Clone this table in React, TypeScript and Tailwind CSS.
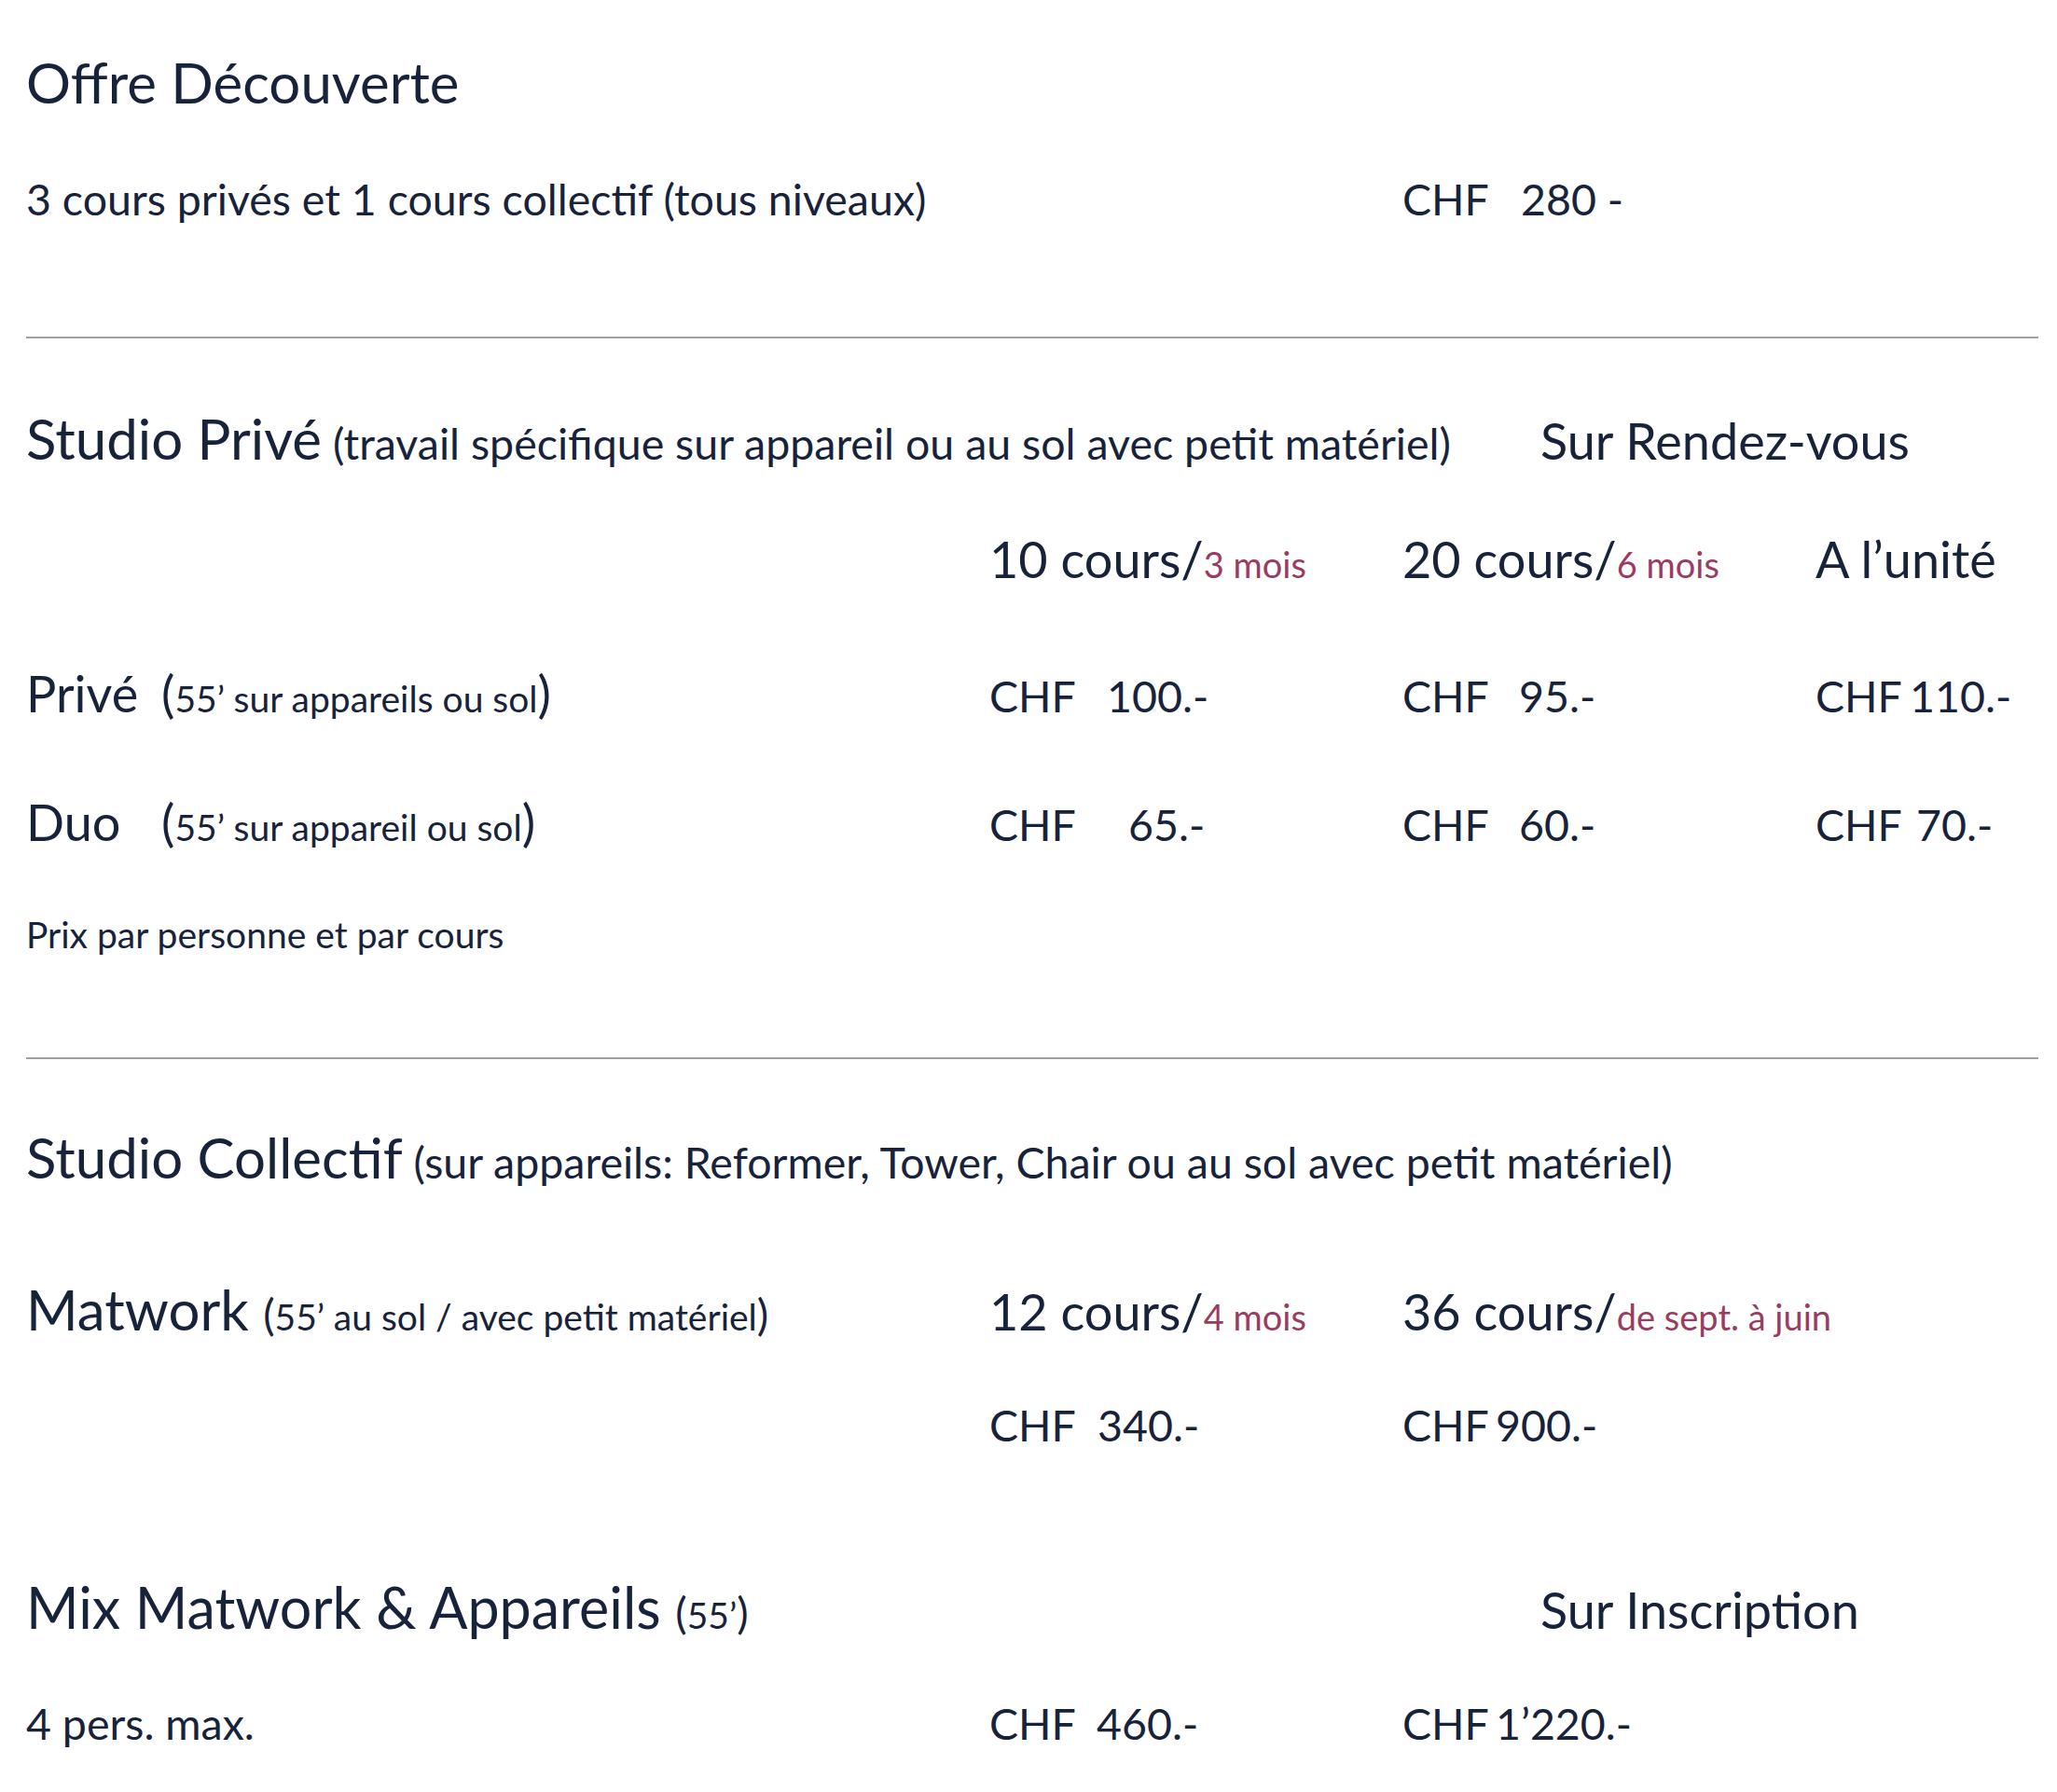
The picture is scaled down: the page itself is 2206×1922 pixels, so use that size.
import React from "react";

const ink = "text-[#17223b]";
const accent = "text-[#9b3b62]";

const Price = ({ cur, amt, w }: { cur: string; amt: string; w: string }) => (
    <span className="whitespace-nowrap">
        <span className={`inline-block ${w}`}>{cur}</span>
        {amt}
    </span>
);

const Rule = ({ mt }: { mt: string }) => <div className={`${mt} h-[2px] w-full bg-[#a0a0a0]`} />;

const App = () => {
    return (
        <div
            className={`min-h-[1922px] w-[2206px] bg-white pl-[28px] pr-[20px] pt-[58px] ${ink} leading-none`}
            style={{ fontFamily: "Lato, 'Open Sans', sans-serif" }}
        >
            {/* Offre découverte */}
            <div className="text-[60px]">Offre Découverte</div>
            <div className="mt-[72px] flex items-baseline text-[46.5px]">
                <div className="w-[1476px] whitespace-nowrap">3 cours privés et 1 cours collectif (tous niveaux)</div>
                <Price cur="CHF" amt="280 -" w="w-[127px]" />
            </div>

            <Rule mt="mt-[124px]" />

            {/* Studio privé */}
            <div className="mt-[77px] flex items-baseline whitespace-nowrap">
                <div className="w-[1624px]">
                    <span className="text-[60px]">Studio Privé</span>
                    <span className="text-[46.5px]"> (travail spécifique sur appareil ou au sol avec petit matériel)</span>
                </div>
                <div className="text-[54px]">Sur Rendez-vous</div>
            </div>

            <div className="mt-[73px] flex items-baseline whitespace-nowrap text-[54px]">
                <div className="w-[1033px]" />
                <div className="w-[443px]">
                    10 cours/<span className={`text-[38px] ${accent}`}>3 mois</span>
                </div>
                <div className="w-[443px]">
                    20 cours/<span className={`text-[38px] ${accent}`}>6 mois</span>
                </div>
                <div>A l’unité</div>
            </div>

            <div className="mt-[90px] flex items-baseline whitespace-nowrap">
                <div className="w-[1033px]">
                    <span className="inline-block w-[145px] text-[54px]">Privé</span>
                    <span className="text-[54px]">(</span>
                    <span className="text-[39px]">55’ sur appareils ou sol</span>
                    <span className="text-[54px]">)</span>
                </div>
                <div className="w-[443px] text-[46.5px]">
                    <Price cur="CHF" amt="100.-" w="w-[126px]" />
                </div>
                <div className="w-[443px] text-[46.5px]">
                    <Price cur="CHF" amt="95.-" w="w-[125px]" />
                </div>
                <div className="text-[46.5px]">
                    <Price cur="CHF" amt="110.-" w="w-[101px]" />
                </div>
            </div>

            <div className="mt-[84px] flex items-baseline whitespace-nowrap">
                <div className="w-[1033px]">
                    <span className="inline-block w-[145px] text-[54px]">Duo</span>
                    <span className="text-[54px]">(</span>
                    <span className="text-[39px]">55’ sur appareil ou sol</span>
                    <span className="text-[54px]">)</span>
                </div>
                <div className="w-[443px] text-[46.5px]">
                    <Price cur="CHF" amt="65.-" w="w-[149px]" />
                </div>
                <div className="w-[443px] text-[46.5px]">
                    <Price cur="CHF" amt="60.-" w="w-[125px]" />
                </div>
                <div className="text-[46.5px]">
                    <Price cur="CHF" amt="70.-" w="w-[108px]" />
                </div>
            </div>

            <div className="mt-[74px] text-[39px]">Prix par personne et par cours</div>

            <Rule mt="mt-[112px]" />

            {/* Studio collectif */}
            <div className="mt-[75px] whitespace-nowrap">
                <span className="text-[60px]">Studio Collectif</span>
                <span className="text-[46.5px]"> (sur appareils: Reformer, Tower, Chair ou au sol avec petit matériel)</span>
            </div>

            <div className="mt-[103px] flex items-baseline whitespace-nowrap">
                <div className="w-[1033px]">
                    <span className="text-[60px]">Matwork </span>
                    <span className="text-[46.5px]">(</span>
                    <span className="text-[39px]">55’ au sol / avec petit matériel</span>
                    <span className="text-[46.5px]">)</span>
                </div>
                <div className="w-[443px] text-[54px]">
                    12 cours/<span className={`text-[38px] ${accent}`}>4 mois</span>
                </div>
                <div className="text-[54px]">
                    36 cours/<span className={`text-[38px] ${accent}`}>de sept. à juin</span>
                </div>
            </div>

            <div className="mt-[71px] flex items-baseline whitespace-nowrap text-[46.5px]">
                <div className="w-[1033px]" />
                <div className="w-[443px]">
                    <Price cur="CHF" amt="340.-" w="w-[116px]" />
                </div>
                <div>
                    <Price cur="CHF" amt="900.-" w="w-[100px]" />
                </div>
            </div>

            {/* Mix */}
            <div className="mt-[142px] flex items-baseline whitespace-nowrap">
                <div className="w-[1624px]">
                    <span className="text-[61px]">Mix Matwork &amp; Appareils </span>
                    <span className="text-[46.5px]">(</span>
                    <span className="text-[39px]">55’</span>
                    <span className="text-[46.5px]">)</span>
                </div>
                <div className="text-[54px]">Sur Inscription</div>
            </div>

            <div className="mt-[71px] flex items-baseline whitespace-nowrap text-[46.5px]">
                <div className="w-[1033px]">4 pers. max.</div>
                <div className="w-[443px]">
                    <Price cur="CHF" amt="460.-" w="w-[115px]" />
                </div>
                <div>
                    <Price cur="CHF" amt="1’220.-" w="w-[100px]" />
                </div>
            </div>
        </div>
    );
};

export default App;
